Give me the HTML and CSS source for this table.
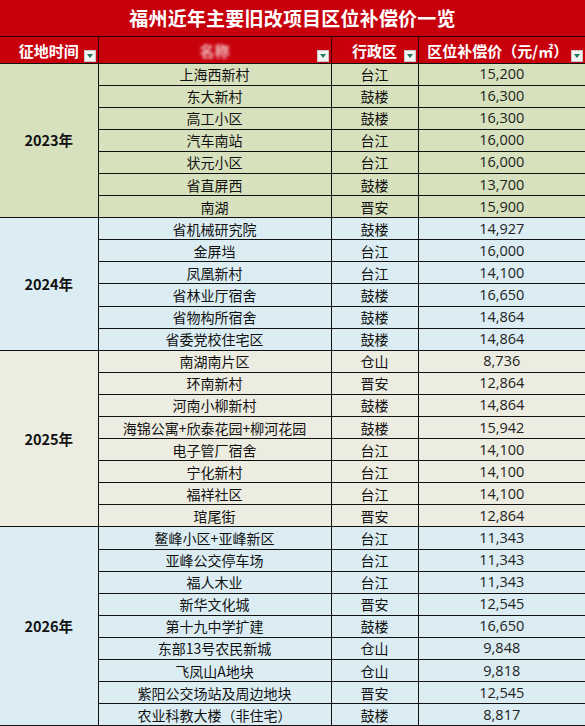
FILE: index.html
```html
<!DOCTYPE html>
<html>
<head>
    <meta charset="utf-8">
    <title>福州近年主要旧改项目区位补偿价一览</title>
    <link rel="stylesheet" href="styles.css">
</head>
<body>
<table class="price_table">
    <colgroup>
        <col class="c_year">
        <col class="c_name">
        <col class="c_area">
        <col class="c_price">
    </colgroup>
    <thead>
    <tr class="title_row"><th colspan="4">福州近年主要旧改项目区位补偿价一览</th></tr>
    <tr class="head_row">
        <th><span class="head_txt">征地时间</span><span class="drop"></span></th>
        <th><span class="head_txt blur">名称</span><span class="drop"></span></th>
        <th><span class="head_txt">行政区</span><span class="drop"></span></th>
        <th class="head_price"><span class="head_txt">区位补偿价（元/㎡）</span><span class="drop"></span></th>
    </tr>
    </thead>
    <tbody class="g_green">
    <tr><td class="year" rowspan="7">2023年</td><td>上海西新村</td><td>台江</td><td class="num">15,200</td></tr>
    <tr><td>东大新村</td><td>鼓楼</td><td class="num">16,300</td></tr>
    <tr><td>高工小区</td><td>鼓楼</td><td class="num">16,300</td></tr>
    <tr><td>汽车南站</td><td>台江</td><td class="num">16,000</td></tr>
    <tr><td>状元小区</td><td>台江</td><td class="num">16,000</td></tr>
    <tr><td>省直屏西</td><td>鼓楼</td><td class="num">13,700</td></tr>
    <tr><td>南湖</td><td>晋安</td><td class="num">15,900</td></tr>
    </tbody>
    <tbody class="g_blue">
    <tr><td class="year" rowspan="6">2024年</td><td>省机械研究院</td><td>鼓楼</td><td class="num">14,927</td></tr>
    <tr><td>金屏垱</td><td>台江</td><td class="num">16,000</td></tr>
    <tr><td>凤凰新村</td><td>台江</td><td class="num">14,100</td></tr>
    <tr><td>省林业厅宿舍</td><td>鼓楼</td><td class="num">16,650</td></tr>
    <tr><td>省物构所宿舍</td><td>鼓楼</td><td class="num">14,864</td></tr>
    <tr><td>省委党校住宅区</td><td>鼓楼</td><td class="num">14,864</td></tr>
    </tbody>
    <tbody class="g_beige">
    <tr><td class="year" rowspan="8">2025年</td><td>南湖南片区</td><td>仓山</td><td class="num">8,736</td></tr>
    <tr><td>环南新村</td><td>晋安</td><td class="num">12,864</td></tr>
    <tr><td>河南小柳新村</td><td>鼓楼</td><td class="num">14,864</td></tr>
    <tr><td>海锦公寓+欣泰花园+柳河花园</td><td>鼓楼</td><td class="num">15,942</td></tr>
    <tr><td>电子管厂宿舍</td><td>台江</td><td class="num">14,100</td></tr>
    <tr><td>宁化新村</td><td>台江</td><td class="num">14,100</td></tr>
    <tr><td>福祥社区</td><td>台江</td><td class="num">14,100</td></tr>
    <tr><td>琯尾街</td><td>晋安</td><td class="num">12,864</td></tr>
    </tbody>
    <tbody class="g_blue">
    <tr><td class="year" rowspan="9">2026年</td><td>鳌峰小区+亚峰新区</td><td>台江</td><td class="num">11,343</td></tr>
    <tr><td>亚峰公交停车场</td><td>台江</td><td class="num">11,343</td></tr>
    <tr><td>福人木业</td><td>台江</td><td class="num">11,343</td></tr>
    <tr><td>新华文化城</td><td>晋安</td><td class="num">12,545</td></tr>
    <tr><td>第十九中学扩建</td><td>鼓楼</td><td class="num">16,650</td></tr>
    <tr><td>东部13号农民新城</td><td>仓山</td><td class="num">9,848</td></tr>
    <tr><td>飞凤山A地块</td><td>仓山</td><td class="num">9,818</td></tr>
    <tr><td>紫阳公交场站及周边地块</td><td>晋安</td><td class="num">12,545</td></tr>
    <tr><td>农业科教大楼（非住宅）</td><td>鼓楼</td><td class="num">8,817</td></tr>
    </tbody>
</table>
</body>
</html>
```

FILE: styles.css
```css
*{margin:0;padding:0;box-sizing:border-box;}
body{
    width: 585px;
    background: #fff;
    font-family: "Noto Sans CJK SC", sans-serif;
    color: #111;
}
.price_table{
    width: 585px;
    border-collapse: collapse;
    table-layout: fixed;
}
.c_year{width: 98px;}
.c_name{width: 233px;}
.c_area{width: 87px;}
.c_price{width: 167px;}

.title_row th{
    height: 36px;
    background: #c8000c;
    color: #fff;
    font-size: 19px;
    font-weight: bold;
    letter-spacing: 0.2px;
    border-bottom: 1px solid #2a0000;
}
.head_row th{
    height: 27px;
    background: #c8000c;
    color: #fff;
    font-size: 15px;
    font-weight: bold;
    border-left: 1px solid #3a0000;
    border-bottom: 1px solid #111;
    position: relative;
}
.head_row th:first-child{border-left: none;}
.head_row th.head_price{padding-right: 8px;}
.head_txt{display: inline-block; line-height: 20px; padding-top: 2px;}
.blur{filter: blur(1.4px); opacity: .75;}
.drop{
    position: absolute;
    right: 2px;
    bottom: 1px;
    width: 12px;
    height: 12px;
    background: #f4f4f4;
    border: 1px solid #c9c9c9;
}
.drop:after{
    content: "";
    position: absolute;
    left: 2px;
    top: 3px;
    border-left: 3px solid transparent;
    border-right: 3px solid transparent;
    border-top: 4px solid #1f7a5a;
}

td{
    height: 22.1px;
    border: 1px solid #111;
    text-align: center;
    font-size: 14px;
    line-height: 20px;
    white-space: nowrap;
}
td:first-child{border-left: none;}
td:last-child{border-right: none;}
td.num{
    font-family: "Open Sans", sans-serif;
    font-size: 14.5px;
    color: #222;
}
td.year{
    font-weight: bold;
    font-size: 14.5px;
}
.g_green td{background: #d8e1bd;}
.g_blue td{background: #dbedf3;}
.g_beige td{background: #edece1;}
```
